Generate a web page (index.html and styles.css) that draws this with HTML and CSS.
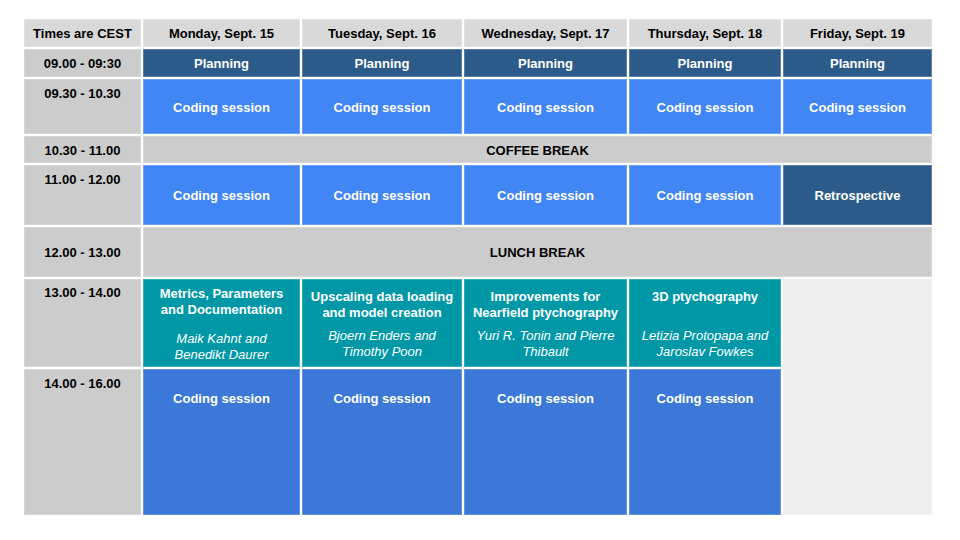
FILE: index.html
```html
<!DOCTYPE html>
<html lang="en">
<head>
<meta charset="utf-8">
<title>Schedule</title>
<link rel="stylesheet" href="styles.css">
</head>
<body>
<div class="schedule">
  <div class="cell head">Times are CEST</div>
  <div class="cell head">Monday, Sept. 15</div>
  <div class="cell head">Tuesday, Sept. 16</div>
  <div class="cell head">Wednesday, Sept. 17</div>
  <div class="cell head">Thursday, Sept. 18</div>
  <div class="cell head">Friday, Sept. 19</div>

  <div class="cell time mid">09.00 - 09:30</div>
  <div class="cell plan">Planning</div>
  <div class="cell plan">Planning</div>
  <div class="cell plan">Planning</div>
  <div class="cell plan">Planning</div>
  <div class="cell plan">Planning</div>

  <div class="cell time">09.30 - 10.30</div>
  <div class="cell code">Coding session</div>
  <div class="cell code">Coding session</div>
  <div class="cell code">Coding session</div>
  <div class="cell code">Coding session</div>
  <div class="cell code">Coding session</div>

  <div class="cell time mid">10.30 - 11.00</div>
  <div class="cell brk span5">COFFEE BREAK</div>

  <div class="cell time">11.00 - 12.00</div>
  <div class="cell code">Coding session</div>
  <div class="cell code">Coding session</div>
  <div class="cell code">Coding session</div>
  <div class="cell code">Coding session</div>
  <div class="cell plan">Retrospective</div>

  <div class="cell time mid">12.00 - 13.00</div>
  <div class="cell brk span5">LUNCH BREAK</div>

  <div class="cell time time-tight">13.00 - 14.00</div>
  <div class="cell talk talk-first">
    <div class="talk-title">Metrics, Parameters<br>and Documentation</div>
    <div class="talk-who talk-who-far">Maik Kahnt and<br>Benedikt Daurer</div>
  </div>
  <div class="cell talk">
    <div class="talk-title">Upscaling data loading<br>and model creation</div>
    <div class="talk-who">Bjoern Enders and<br>Timothy Poon</div>
  </div>
  <div class="cell talk">
    <div class="talk-title">Improvements for<br>Nearfield ptychography</div>
    <div class="talk-who">Yuri R. Tonin and Pierre<br>Thibault</div>
  </div>
  <div class="cell talk">
    <div class="talk-title">3D ptychography</div>
    <div class="talk-who">Letizia Protopapa and<br>Jaroslav Fowkes</div>
  </div>
  <div class="cell empty"></div>

  <div class="cell time">14.00 - 16.00</div>
  <div class="cell code2">Coding session</div>
  <div class="cell code2">Coding session</div>
  <div class="cell code2">Coding session</div>
  <div class="cell code2">Coding session</div>
</div>
</body>
</html>
```

FILE: styles.css
```css
* { box-sizing: border-box; }

html, body {
  margin: 0;
  background: #ffffff;
}

body {
  padding: 19px 0 0 24px;
  font-family: "Liberation Sans", Arial, sans-serif;
  font-size: 13px;
  line-height: 16px;
  font-weight: bold;
  color: #000000;
}

.schedule {
  display: grid;
  grid-template-columns: 117px 157px 160px 163px 152px 149px;
  grid-template-rows: 28px 28px 55px 27px 60px 50px 88px 146px;
  gap: 2px;
  width: 908px;
}

.cell {
  display: flex;
  flex-direction: column;
  align-items: center;
  justify-content: center;
  text-align: center;
  padding: 2px 5px 0;
  box-shadow: inset 0 0 0 1px rgba(255, 255, 255, 0.22);
}

.head {
  background: #d9d9d9;
}

.time {
  background: #cccccc;
  justify-content: flex-start;
  padding-top: 7px;
}

.time.mid {
  justify-content: center;
  padding-top: 2px;
}

.time.time-tight {
  padding-top: 6px;
}

.plan {
  background: #2c5b89;
  color: #ffffff;
}

.code {
  background: #4285f4;
  color: #ffffff;
}

.code2 {
  background: #3c78d8;
  color: #ffffff;
  justify-content: flex-start;
  padding-top: 22px;
}

.brk {
  background: #cccccc;
}

.span5 {
  grid-column: span 5;
}

.talk {
  background: #0097a7;
  color: #ffffff;
  justify-content: flex-start;
  padding-top: 10px;
}

.talk-first {
  padding-top: 7px;
}

.talk-title {
  min-height: 32px;
}

.talk-who {
  font-weight: normal;
  font-style: italic;
  margin-top: 7px;
}

.talk-who-far {
  margin-top: 13px;
}

.empty {
  background: #eeeeee;
  grid-row: span 2;
}
```
